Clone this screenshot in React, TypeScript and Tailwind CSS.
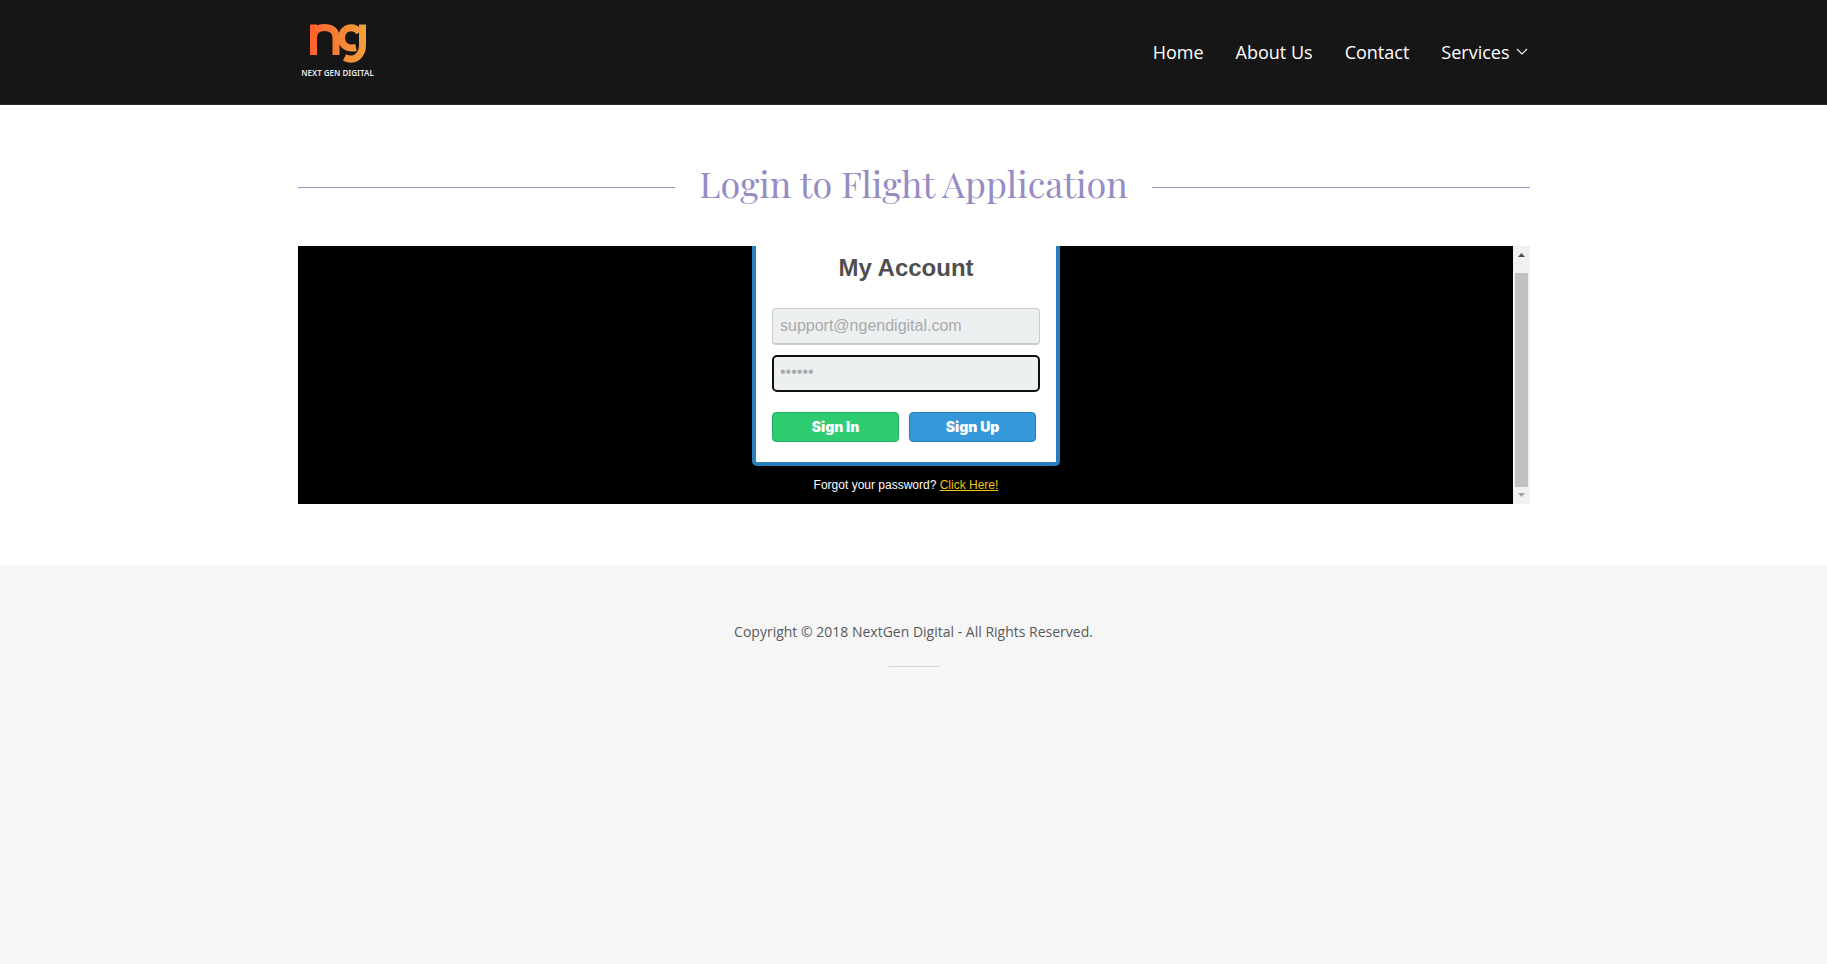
const navItems = ["Home", "About Us", "Contact"];

function Logo() {
  return (
    <a href="#home" className="flex w-20 flex-col items-center pb-2" aria-label="Next Gen Digital">
      <svg width="60" height="48" viewBox="1 0 60 48" fill="none" aria-hidden="true">
        <defs>
          <linearGradient id="brand" gradientUnits="userSpaceOnUse" x1="2" y1="20" x2="58" y2="20">
            <stop offset="0" stopColor="#ff5f2e" />
            <stop offset="1" stopColor="#f2a03a" />
          </linearGradient>
        </defs>
        <g stroke="url(#brand)" strokeWidth="7">
          <path d="M6.5 37V6.500M6.500 20C6.500 12.500 11 9.500 17.500 9.500C25 9.500 29 13 29 20V37" />
          <path d="M55.500 6.500V27C55.500 37 48 44.500 37.500 39.500" />
          <path d="M52.500 14C50 11 47.500 9.700 44.500 9.700C38.500 9.700 34.500 14 34.500 20C34.500 27 40 31.500 49 29.500" />
        </g>
      </svg>
      <span className="mt-px font-['Noto_Sans',sans-serif] text-[8px] leading-3 font-semibold whitespace-nowrap text-[#e8e8e8]">
        NEXT GEN DIGITAL
      </span>
    </a>
  );
}

function Header() {
  return (
    <header className="border-b border-[#2b2b2b] bg-[#161616]">
      <div className="mx-auto flex h-[104px] max-w-[1232px] items-center justify-between">
        <Logo />
        <nav className="flex items-center gap-8 text-lg text-white">
          {navItems.map((item) => (
            <a key={item} href="#nav">
              {item}
            </a>
          ))}
          <button type="button" className="flex items-center gap-1.5">
            Services
            <svg width="14" height="8" viewBox="0 0 14 8" fill="none" stroke="white" strokeWidth="1.100" aria-hidden="true">
              <path d="M1 1l5 5l5-5" />
            </svg>
          </button>
        </nav>
      </div>
    </header>
  );
}

function AccountForm() {
  return (
    <form className="w-[308px] rounded-b-[5px] border-4 border-t-0 border-[#2980b9] bg-white px-4 pt-2 pb-5">
      <h2 className="text-center text-2xl leading-7 font-bold text-[#4f4f4f]">My Account</h2>
      <input
        type="email"
        aria-label="Email"
        placeholder="support@ngendigital.com"
        className="mt-[26px] block h-[37px] w-full rounded border border-b-2 border-[#cccccc] bg-[#ecf0f1] px-[7px] text-base text-[#aaaaaa] placeholder:text-[#aaaaaa]"
      />
      <input
        type="password"
        aria-label="Password"
        placeholder="••••••"
        className="mt-[10px] block h-[37px] w-full rounded-[5px] border-2 border-[#101010] bg-[#ecf0f1] px-1.5 pb-1 text-base text-[#aaaaaa] placeholder:text-[#aaaaaa]"
      />
      <div className="mt-5 flex gap-[10px] font-['Inter',sans-serif] text-sm font-black text-white">
        <button type="button" className="h-[30px] w-[127px] rounded border border-[#27ae60] bg-[#2ecc71]">
          Sign In
        </button>
        <button type="button" className="h-[30px] w-[127px] rounded border border-[#2980b9] bg-[#3498db]">
          Sign Up
        </button>
      </div>
    </form>
  );
}

function Scrollbar() {
  return (
    <div className="flex w-[17px] flex-col items-center bg-[#f1f1f1]" aria-hidden="true">
      <svg width="17" height="27" viewBox="0 0 17 27">
        <path d="M5 11h7l-3.500-4z" fill="#505050" />
      </svg>
      <div className="w-[13px] grow bg-[#c1c1c1]" />
      <svg width="17" height="17" viewBox="0 0 17 17">
        <path d="M5 6h7l-3.500 4z" fill="#a3a3a3" />
      </svg>
    </div>
  );
}

export default function App() {
  return (
    <div className="flex min-h-screen flex-col bg-white font-['Open_Sans',sans-serif]">
      <Header />
      <main className="mx-auto w-full max-w-[1232px] pt-[54px] pb-[61px]">
        <div className="flex items-center gap-6">
          <div className="mt-2 h-px grow bg-[#9a8fc2]" />
          <h1 className="font-['Playfair_Display','Liberation_Serif',serif] text-4xl leading-[49px] text-[#968cc3]">
            Login to Flight Application
          </h1>
          <div className="mt-2 h-px grow bg-[#9a8fc2]" />
        </div>
        <section className="mt-[38px] flex bg-black font-['Liberation_Sans',Arial,sans-serif]">
          <div className="flex grow flex-col items-center pl-0.5">
            <AccountForm />
            <p className="pt-3 pb-3 text-xs leading-[14px] text-white">
              Forgot your password?{" "}
              <a href="#reset" className="text-[#f1c40f] underline">
                Click Here!
              </a>
            </p>
          </div>
          <Scrollbar />
        </section>
      </main>
      <footer className="flex grow flex-col items-center bg-[#f6f6f6] pt-[57px] text-sm text-[#5a5a5a]">
        <p>Copyright © 2018 NextGen Digital - All Rights Reserved.</p>
        <div className="mt-6 h-px w-[50px] bg-[#d5d5d5]" />
      </footer>
    </div>
  );
}
